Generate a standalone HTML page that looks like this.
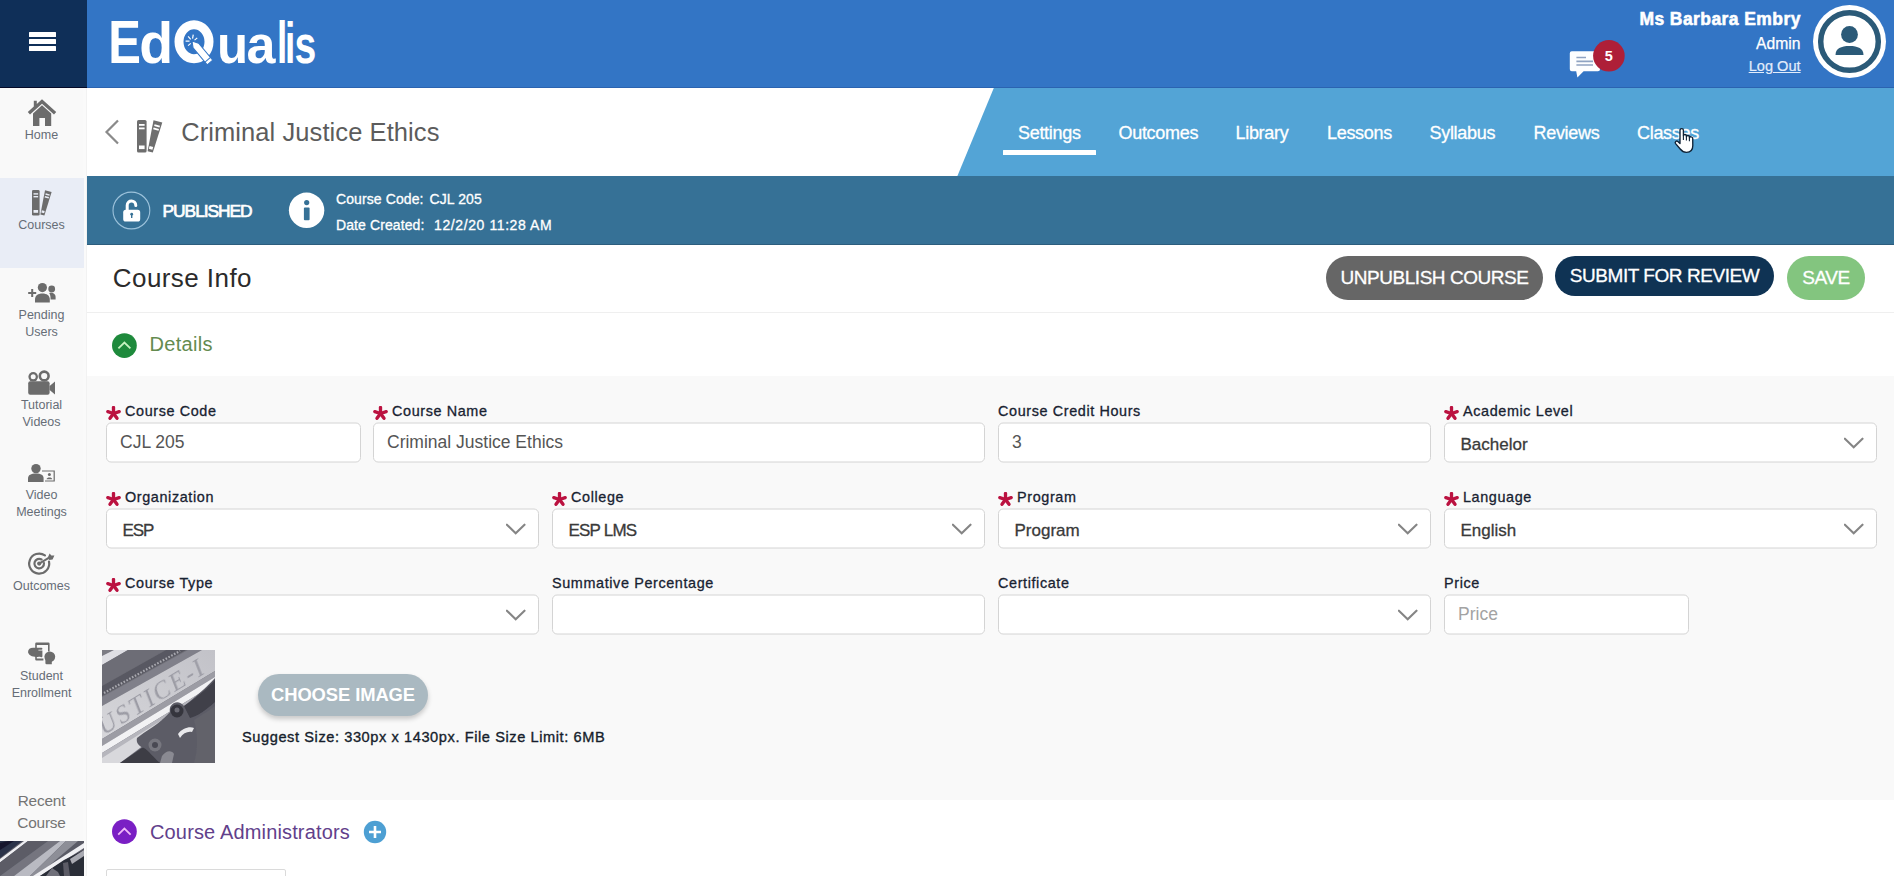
<!DOCTYPE html>
<html>
<head>
<meta charset="utf-8">
<title>EdQualis - Course Settings</title>
<style>
*{box-sizing:border-box;margin:0;padding:0}
html,body{width:1894px;height:876px;overflow:hidden;background:#fff}
body{font-family:"Liberation Sans",sans-serif;position:relative;color:#222}
.abs{position:absolute}
.t{position:absolute;white-space:nowrap;line-height:1}
/* header */
#hdr{left:0;top:0;width:1894px;height:88px;background:#3375c5;border-bottom:1px solid #2b63b0}
#ham{left:0;top:0;width:87px;height:88px;background:#0f2f58;border-bottom:1px solid #040a28}
#ham i{position:absolute;left:28.8px;width:27.4px;height:5px;background:#fff;border-radius:0.5px}
#side{left:0;top:88px;width:87px;height:788px;background:#f9f9f9;border-right:1px solid #f2f2f2;box-shadow:inset -3px 0 0 #fafafa}
#sideact{left:0;top:178px;width:84px;height:90px;background:#e9edf6}
.sl{transform:translateY(0.8px);position:absolute;left:0;width:83px;text-align:center;font-size:12.5px;line-height:17px;color:#666d77}
.si{position:absolute;fill:#6b6b6b}
/* title bar */
#tbar{left:87px;top:88px;width:1807px;height:88px;background:#fff}
#tabs{left:957px;top:88px;width:937px;height:88px;background:#53a4d6;clip-path:polygon(36.8px 0,100% 0,100% 100%,0.4px 100%)}
.tab{position:absolute;top:123.5px;font-size:18px;color:#fff;white-space:nowrap;line-height:1;letter-spacing:-0.3px;-webkit-text-stroke:0.3px #fff}
#sbar{left:87px;top:176px;width:1807px;height:69px;background:#367196;border-bottom:1px solid #2c5d7d}
/* content */
#info{left:87px;top:245px;width:1807px;height:69px;background:#fff;border-bottom:2px solid #efefef}
#det{left:87px;top:313px;width:1807px;height:63px;background:#fff}
#form{left:87px;top:376px;width:1807px;height:424px;background:#f9f9f9}
#adm{left:87px;top:800px;width:1807px;height:76px;background:#fff}
.sb{font-size:14px;color:#fff;letter-spacing:0.1px;-webkit-text-stroke:0.3px #fff}
.btn{-webkit-text-stroke:0.3px #fff;position:absolute;border-radius:22px;color:#fff;font-size:19px;text-align:center;white-space:nowrap}
.lbl{position:absolute;font-size:14.4px;color:#182231;white-space:nowrap;line-height:1;letter-spacing:0.62px;transform:translateY(-1px);-webkit-text-stroke:0.3px #182231}
.star{position:absolute;width:15px;height:15px}
.inp{transform:translateY(0.5px);position:absolute;height:39.6px;background:#fff;border:1px solid #d4d4d4;border-radius:5px;font-size:17.5px;color:#555;line-height:37px;padding-left:13px;white-space:nowrap}
.sel{font-size:17px;color:#3a3a3a;padding-left:15.5px;line-height:42.8px;-webkit-text-stroke:0.3px #3a3a3a}
.chev{position:absolute;right:12px;top:11.2px;width:20px;height:16px}
</style>
</head>
<body>
<!-- HEADER -->
<div id="hdr" class="abs"></div>
<div id="ham" class="abs"><i style="top:31.8px"></i><i style="top:39px"></i><i style="top:46.2px"></i></div>

<!-- logo -->
<svg class="abs" id="logo" style="left:100px;top:10px" width="230" height="70" viewBox="100 10 230 70">
 <g fill="#fff" font-family="Liberation Sans" font-weight="bold" font-size="56">
  <text x="0" y="0" transform="translate(108.3,62.6) scale(0.875,1.08)">E</text>
  <text x="0" y="0" transform="translate(139.3,62.6) scale(0.99,1.03)">d</text>
  <text x="0" y="0" transform="translate(217,62.6) scale(0.91,0.97)">u</text>
  <text x="0" y="0" transform="translate(246.6,62.6) scale(0.93,0.97)">a</text>
  <text x="0" y="0" transform="translate(277,62.6) scale(0.66,1.05)">l</text>
  <text x="0" y="0" transform="translate(285,62.6) scale(0.66,1.03)">i</text>
  <text x="0" y="0" transform="translate(294.5,62.6) scale(0.70,0.97)">s</text>
 </g>
 <ellipse cx="194" cy="41.8" rx="15" ry="17" fill="none" stroke="#fff" stroke-width="9"/>
 <g transform="translate(192,41) rotate(-40)">
  <path d="M-3.6 6 L0 0 L3.6 6 L3.6 28 L-3.6 28 Z" fill="#fff" stroke="#3375c5" stroke-width="1"/>
  <path d="M-3.6 24.5 H3.6" stroke="#3375c5" stroke-width="1"/>
  <path d="M0 -2 V-6 M-2 -1.5 L-5 -4 M2 -1.5 L5 -4 M-2.5 1 H-6 M2.5 1 H6" stroke="#fff" stroke-width="1.2"/>
 </g>
</svg>
<!-- user -->
<div class="t" style="right:93.2px;top:11px;font-size:17.5px;font-weight:bold;color:#fff;letter-spacing:0.42px;-webkit-text-stroke:0.55px #fff">Ms Barbara Embry</div>
<div class="t" style="right:93.6px;top:36.2px;font-size:15.7px;color:#fff;-webkit-text-stroke:0.25px #fff">Admin</div>
<div class="t" style="right:93.4px;top:58.5px;font-size:14.6px;color:#e3edfb;text-decoration:underline;-webkit-text-stroke:0.2px #e3edfb">Log Out</div>
<svg class="abs" style="left:1812px;top:4px" width="76" height="76" viewBox="0 0 76 76">
 <circle cx="37.5" cy="37.5" r="36.5" fill="#fff"/>
 <circle cx="37.5" cy="37.5" r="28.8" fill="#fff" stroke="#2b5a78" stroke-width="5.5"/>
 <circle cx="37.5" cy="30.5" r="8.4" fill="#2b5a78"/>
 <path d="M23.5 51 C23.5 44.5 29 42 37.5 42 C46 42 51.5 44.5 51.5 51 Z" fill="#2b5a78"/>
</svg>
<!-- chat -->
<svg class="abs" style="left:1566px;top:38px" width="62" height="44" viewBox="1566 38 62 44">
 <path d="M1571.8 51.3 H1598 Q1600 51.3 1600 53.3 V69.2 Q1600 71.2 1598 71.2 H1583.6 L1577.4 77.6 L1576.2 71.2 H1571.8 Q1569.8 71.2 1569.8 69.2 V53.3 Q1569.8 51.3 1571.8 51.3 Z" fill="#fdfeff"/>
 <path d="M1576.4 57.5 H1586 M1576.4 61.3 H1593 M1576.4 65 H1593" stroke="#8fa3c2" stroke-width="1.7"/>
 <circle cx="1608.9" cy="55.8" r="15.8" fill="#ae1f38"/>
 <text x="1608.9" y="61" text-anchor="middle" font-family="Liberation Sans" font-weight="bold" font-size="14.5" fill="#fff">5</text>
</svg>

<!-- SIDEBAR -->
<div id="side" class="abs"></div>
<div id="sideact" class="abs"></div>

<svg class="abs" style="left:0;top:88px" width="87" height="600" viewBox="0 88 87 600">
 <!-- home -->
 <g fill="#6c6c6c">
  <path d="M42 99.3 L56.2 112 L54 114.6 L42 103.7 L30 114.6 L27.8 112 L33.8 106.6 V100.8 H36.8 V103.9 Z"/>
  <path d="M42 105.2 L51.2 113.6 V126 H45 V118 H39.4 V126 H33 V113.6 Z"/>
 </g>
 <!-- courses -->
 <g fill="#6c6c6c">
  <rect x="32" y="190" width="7.6" height="25.5" rx="1.3"/>
  <path d="M45 190.2 L51.6 192 L44.4 215.6 L40.4 214.6 Z"/>
 </g>
 <g fill="#e9edf6">
  <rect x="33.5" y="193.2" width="4.6" height="1.4"/><rect x="33.5" y="196" width="4.6" height="1.4"/><rect x="33.5" y="210" width="4.6" height="2.8"/>
  <path d="M45.8 193.3 L49.8 194.4 L49.4 195.8 L45.4 194.7 Z"/><path d="M45 196 L49 197.1 L48.6 198.5 L44.6 197.4 Z"/><path d="M41.9 210.3 L44.7 211.1 L44.1 213.3 L41.3 212.5 Z"/>
 </g>
 <!-- pending users -->
 <g fill="#6c6c6c">
  <path d="M31.2 289 H33.2 V292 H36.2 V294 H33.2 V297 H31.2 V294 H28.2 V292 H31.2 Z"/>
  <circle cx="42.4" cy="287.6" r="4.6"/>
  <path d="M35 302.6 V299.4 C35 295.4 38 293.4 42.4 293.4 C46.8 293.4 49.8 295.4 49.8 299.4 V302.6 Z"/>
  <circle cx="51.7" cy="289" r="3.4"/>
  <path d="M49.2 293 C53.4 292.2 55.6 294.4 55.6 296.8 V299.6 H50.6 C50.6 296.8 50.4 294.8 49.2 293 Z"/>
 </g>
 <!-- tutorial videos -->
 <g fill="#6c6c6c">
  <circle cx="33.2" cy="376.8" r="4.8"/><circle cx="44.2" cy="376" r="5.7"/>
  <rect x="28.2" y="381.2" width="21.4" height="13.6" rx="2"/>
  <path d="M49.6 386 L55 381.6 V394.4 L49.6 390 Z"/>
 </g>
 <circle cx="33.2" cy="376.8" r="2.5" fill="#f9f9f9"/><circle cx="44.2" cy="376" r="3.1" fill="#f9f9f9"/>
 <!-- video meetings -->
 <g fill="#6c6c6c">
  <circle cx="36" cy="468.6" r="4.7"/>
  <path d="M28 482 V478.6 C28 475 31 473.6 36 473.6 C41 473.6 43.6 475 43.6 478.6 V482 Z"/>
  <path d="M42 470.4 H54.8 V481.6 H45 V480.4 H53.6 V471.6 H42 Z"/>
  <circle cx="49.4" cy="474.6" r="1.5"/><path d="M46.6 479.2 C46.6 477 52.2 477 52.2 479.2 Z"/>
 </g>
 <!-- outcomes -->
 <g fill="none" stroke="#6c6c6c" stroke-width="2.2" stroke-linecap="round">
  <path d="M44.94 555.41 A10 10 0 1 0 48.98 561.52"/>
  <path d="M41.6 559.44 A4.8 4.8 0 1 0 43.98 563.18"/>
 </g>
 <circle cx="39.2" cy="563.6" r="2.1" fill="#6c6c6c"/>
 <path d="M39.2 563.6 L50 557.2" stroke="#6c6c6c" stroke-width="2"/>
 <path d="M47.6 558 L49.6 553.4 L51.4 555.4 L54.4 555.4 L52.6 559.4 L49.4 560 Z" fill="#6c6c6c"/>
 <!-- student enrollment -->
 <g fill="#6c6c6c">
  <path d="M36.4 642.6 H48.4 Q49.6 642.6 49.6 643.8 V651.4 H48 V645 H36.8 V658.6 H43.4 V660.5 H36.4 Q35.2 660.5 35.2 659.3 V643.8 Q35.2 642.6 36.4 642.6 Z"/>
  <path d="M28 652.2 C28 649.2 30.2 647.8 33 647.8 H41.4 C42.8 647.8 42.8 649.8 41.4 649.8 H38.4 V650.6 H42.4 V656.2 C42.4 657.2 41 657.4 40 656.8 C38 657 29.4 657.6 28 652.2 Z"/>
  <circle cx="49.8" cy="656.8" r="5.4"/>
  <path d="M45.4 658 H51.8 V664.2 H46.6 Q45.4 664.2 45.4 663 Z"/>
 </g>
</svg>
<div class="sl" style="top:125.5px">Home</div>
<div class="sl" style="top:215.5px">Courses</div>
<div class="sl" style="top:306px">Pending<br>Users</div>
<div class="sl" style="top:396px">Tutorial<br>Videos</div>
<div class="sl" style="top:486px">Video<br>Meetings</div>
<div class="sl" style="top:576.5px">Outcomes</div>
<div class="sl" style="top:666.5px">Student<br>Enrollment</div>
<div class="sl" style="top:789.3px;font-size:15.4px;line-height:21.8px;letter-spacing:-0.2px;color:#747474">Recent<br>Course</div>
<div id="thumb" class="abs" style="left:0;top:841px;width:84px;height:35px;background:#3a3d4c;overflow:hidden"><svg width="84" height="35" viewBox="0 841 84 35" style="display:block">
 <defs><filter id="bl2"><feGaussianBlur stdDeviation="0.6"/></filter></defs>
 <rect x="0" y="841" width="84" height="35" fill="#5a5b66"/>
 <g filter="url(#bl2)">
  <polygon points="0,841 22,841 0,858" fill="#2a3048"/>
  <polygon points="0,843 8,841 14,841 0,850" fill="#14182e"/>
  <polygon points="0,859 24,841 28,841 0,862.5" fill="#eeeef2"/>
  <polygon points="0,862.5 28,841 48,841 0,876" fill="#5b5c66"/>
  <polygon points="0,876 48,841 60,841 14,876" fill="#74757f"/>
  <polygon points="14,876 60,841 66,841 30,876" fill="#b9bac2"/>
  <polygon points="30,876 66,841 78,841 37,876" fill="#8d8e97"/>
  <polygon points="33,876 84,843 84,848 40,876" fill="#f0f0f3"/>
  <polygon points="40,876 64,860 84,850 84,876" fill="#2c2d38"/>
  <polygon points="70,859 84,850 84,856 72,864" fill="#a9aab2"/>
  <polygon points="46,876 52,868 58,872 60,876" fill="#6f707a"/>
  <polygon points="63,863 68,862 70,876 64,876" fill="#5b5c66"/>
 </g>
</svg></div>

<!-- TITLE BAR -->
<div id="tbar" class="abs"></div>
<div id="tabs" class="abs"></div>
<div id="sbar" class="abs"></div>

<!-- back chevron, books, title -->
<svg class="abs" style="left:100px;top:115px" width="70" height="42" viewBox="100 115 70 42">
 <path d="M118 120.5 L106.5 132 L118 143.5" fill="none" stroke="#8a8a8a" stroke-width="2.2"/>
 <g fill="#6e6e6e">
  <rect x="137" y="120" width="9.6" height="32.5" rx="1.6"/>
  <path d="M153.5 120.3 L162.3 122.6 L152.8 152.5 L147.6 151.2 Z"/>
 </g>
 <g fill="#fff">
  <rect x="139" y="124" width="5.6" height="1.8"/><rect x="139" y="127.5" width="5.6" height="1.8"/>
  <rect x="139" y="145.5" width="5.6" height="3.6"/>
  <path d="M154.6 124.3 L160 125.8 L159.5 127.5 L154.1 126 Z"/><path d="M153.6 127.6 L159 129.1 L158.5 130.8 L153.1 129.3 Z"/>
  <path d="M149.6 146 L153.2 147 L152.4 149.8 L148.8 148.8 Z"/>
 </g>
</svg>
<div class="t" style="left:181.2px;top:120px;font-size:25.5px;color:#5c5c5c;letter-spacing:0.08px">Criminal Justice Ethics</div>
<div class="tab" style="left:1018px">Settings</div>
<div class="abs" style="left:1003px;top:150.4px;width:93px;height:5px;background:#fff;border-radius:0.5px"></div>
<div class="tab" style="left:1118.5px">Outcomes</div>
<div class="tab" style="left:1235.5px">Library</div>
<div class="tab" style="left:1327px">Lessons</div>
<div class="tab" style="left:1429.5px">Syllabus</div>
<div class="tab" style="left:1533.5px">Reviews</div>
<div class="tab" style="left:1637px">Classes</div>
<!-- cursor -->
<svg class="abs" style="left:1670px;top:124px" width="28" height="32" viewBox="1670 124 28 32">
 <path d="M1680 141.6 L1680 130.3 C1680 128.1 1683.4 128.1 1683.4 130.3 L1683.4 135.7 C1683.6 134.1 1686.3 134.1 1686.4 135.9 L1686.4 136.7 C1686.6 135.1 1689.3 135.1 1689.4 136.9 L1689.4 137.7 C1689.7 136.3 1692.6 136.5 1692.7 138.3 L1692.8 145.5 C1692.8 149.6 1690.5 152.3 1686.5 152.3 C1683 152.3 1681.8 151.2 1680.2 149 L1675.6 143.6 C1674.4 142 1676.4 140.2 1677.9 141.5 L1680 143.6 Z" fill="#fff" stroke="#0f2236" stroke-width="1.35" stroke-linejoin="round"/>
 <path d="M1683.4 135.7 V140 M1686.4 136.7 V140.6 M1689.4 137.7 V141.2" stroke="#0f2236" stroke-width="1.1" fill="none"/>
</svg>

<!-- status bar -->
<svg class="abs" style="left:108px;top:186px" width="230" height="50" viewBox="108 186 230 50">
 <circle cx="131.4" cy="210.5" r="18.4" fill="none" stroke="#9cc2db" stroke-width="1.1"/>
 <path d="M127.2 210 V205.2 C127.2 199.6 135.8 199.6 135.8 205.4" fill="none" stroke="#fff" stroke-width="3" stroke-linecap="round"/>
 <rect x="123.2" y="209.8" width="17" height="11.7" rx="2.6" fill="#fff"/>
 <circle cx="131.7" cy="214.2" r="1.4" fill="#367196"/><rect x="131" y="214.2" width="1.4" height="3.8" fill="#367196"/>
 <circle cx="306.6" cy="210.3" r="17.7" fill="#fff"/>
 <circle cx="306.7" cy="202.6" r="2.6" fill="#367196"/>
 <rect x="303.9" y="207.6" width="5.7" height="12.6" rx="1" fill="#367196"/>
</svg>
<div class="t" style="left:162.6px;top:203.2px;font-size:17.4px;color:#fff;letter-spacing:-1.07px;-webkit-text-stroke:0.7px #fff">PUBLISHED</div>
<div class="t sb" style="left:336px;top:192.3px">Course Code:</div>
<div class="t sb" style="left:429.5px;top:192.3px">CJL 205</div>
<div class="t sb" style="left:336px;top:217.5px">Date Created:</div>
<div class="t sb" style="left:434px;top:217.5px;letter-spacing:0.6px">12/2/20 11:28 AM</div>

<!-- CONTENT -->
<div id="info" class="abs"></div>
<div id="det" class="abs"></div>
<div id="form" class="abs"></div>
<div id="adm" class="abs"></div>

<div class="t" style="left:112.8px;top:264.8px;font-size:26px;color:#2b2b2b;letter-spacing:0.43px">Course Info</div>
<div class="btn" style="left:1326px;top:256px;width:217px;height:44px;line-height:44px;background:#666;letter-spacing:-0.45px">UNPUBLISH COURSE</div>
<div class="btn" style="left:1555px;top:256px;width:219px;height:40px;line-height:39px;background:#0f3354;letter-spacing:-0.45px">SUBMIT FOR REVIEW</div>
<div class="btn" style="left:1787px;top:256px;width:78px;height:44px;line-height:44px;background:#83c57f;letter-spacing:-0.45px">SAVE</div>
<svg class="abs" style="left:111px;top:332px" width="27" height="27" viewBox="0 0 27 27"><circle cx="13.4" cy="13.6" r="12.4" fill="#1e8a3c"/><path d="M7.4 16.4 L13.4 10.6 L19.4 16.4" fill="none" stroke="#c6f3c0" stroke-width="1.8"/></svg>
<div class="t" style="left:149.6px;top:334.3px;font-size:20px;color:#648b4f;letter-spacing:0.3px">Details</div>
<svg class="star" style="left:105.8px;top:405.5px" viewBox="-6.5 -6.5 13 13"><g stroke="#bb1240" stroke-width="2.9" stroke-linecap="round"><path d="M0 0 V-5.2"/><path d="M0 0 L4.95 -1.6"/><path d="M0 0 L3.05 4.2"/><path d="M0 0 L-3.05 4.2"/><path d="M0 0 L-4.95 -1.6"/></g></svg><div class="lbl" style="left:125px;top:405px">Course Code</div>
<div class="inp" style="left:106px;top:422px;width:255px">CJL 205</div>
<svg class="star" style="left:372.8px;top:405.5px" viewBox="-6.5 -6.5 13 13"><g stroke="#bb1240" stroke-width="2.9" stroke-linecap="round"><path d="M0 0 V-5.2"/><path d="M0 0 L4.95 -1.6"/><path d="M0 0 L3.05 4.2"/><path d="M0 0 L-3.05 4.2"/><path d="M0 0 L-4.95 -1.6"/></g></svg><div class="lbl" style="left:392px;top:405px">Course Name</div>
<div class="inp" style="left:373px;top:422px;width:612px">Criminal Justice Ethics</div>
<div class="lbl" style="left:998px;top:405px">Course Credit Hours</div>
<div class="inp" style="left:998px;top:422px;width:433px">3</div>
<svg class="star" style="left:1443.8px;top:405.5px" viewBox="-6.5 -6.5 13 13"><g stroke="#bb1240" stroke-width="2.9" stroke-linecap="round"><path d="M0 0 V-5.2"/><path d="M0 0 L4.95 -1.6"/><path d="M0 0 L3.05 4.2"/><path d="M0 0 L-3.05 4.2"/><path d="M0 0 L-4.95 -1.6"/></g></svg><div class="lbl" style="left:1463px;top:405px">Academic Level</div>
<div class="inp sel" style="left:1444px;top:422px;width:433px">Bachelor<svg class="chev" viewBox="0 0 20 16"><path d="M0.9 4.2 L9.7 12.7 L18.5 4.2" fill="none" stroke="#858585" stroke-width="2.1" stroke-linecap="round"/></svg></div>
<svg class="star" style="left:105.8px;top:491.5px" viewBox="-6.5 -6.5 13 13"><g stroke="#bb1240" stroke-width="2.9" stroke-linecap="round"><path d="M0 0 V-5.2"/><path d="M0 0 L4.95 -1.6"/><path d="M0 0 L3.05 4.2"/><path d="M0 0 L-3.05 4.2"/><path d="M0 0 L-4.95 -1.6"/></g></svg><div class="lbl" style="left:125px;top:491px">Organization</div>
<div class="inp sel" style="left:106px;top:508px;width:433px"><span style="letter-spacing:-1.1px">ESP</span><svg class="chev" viewBox="0 0 20 16"><path d="M0.9 4.2 L9.7 12.7 L18.5 4.2" fill="none" stroke="#858585" stroke-width="2.1" stroke-linecap="round"/></svg></div>
<svg class="star" style="left:551.8px;top:491.5px" viewBox="-6.5 -6.5 13 13"><g stroke="#bb1240" stroke-width="2.9" stroke-linecap="round"><path d="M0 0 V-5.2"/><path d="M0 0 L4.95 -1.6"/><path d="M0 0 L3.05 4.2"/><path d="M0 0 L-3.05 4.2"/><path d="M0 0 L-4.95 -1.6"/></g></svg><div class="lbl" style="left:571px;top:491px">College</div>
<div class="inp sel" style="left:552px;top:508px;width:433px"><span style="letter-spacing:-0.8px">ESP LMS</span><svg class="chev" viewBox="0 0 20 16"><path d="M0.9 4.2 L9.7 12.7 L18.5 4.2" fill="none" stroke="#858585" stroke-width="2.1" stroke-linecap="round"/></svg></div>
<svg class="star" style="left:997.8px;top:491.5px" viewBox="-6.5 -6.5 13 13"><g stroke="#bb1240" stroke-width="2.9" stroke-linecap="round"><path d="M0 0 V-5.2"/><path d="M0 0 L4.95 -1.6"/><path d="M0 0 L3.05 4.2"/><path d="M0 0 L-3.05 4.2"/><path d="M0 0 L-4.95 -1.6"/></g></svg><div class="lbl" style="left:1017px;top:491px">Program</div>
<div class="inp sel" style="left:998px;top:508px;width:433px">Program<svg class="chev" viewBox="0 0 20 16"><path d="M0.9 4.2 L9.7 12.7 L18.5 4.2" fill="none" stroke="#858585" stroke-width="2.1" stroke-linecap="round"/></svg></div>
<svg class="star" style="left:1443.8px;top:491.5px" viewBox="-6.5 -6.5 13 13"><g stroke="#bb1240" stroke-width="2.9" stroke-linecap="round"><path d="M0 0 V-5.2"/><path d="M0 0 L4.95 -1.6"/><path d="M0 0 L3.05 4.2"/><path d="M0 0 L-3.05 4.2"/><path d="M0 0 L-4.95 -1.6"/></g></svg><div class="lbl" style="left:1463px;top:491px">Language</div>
<div class="inp sel" style="left:1444px;top:508px;width:433px">English<svg class="chev" viewBox="0 0 20 16"><path d="M0.9 4.2 L9.7 12.7 L18.5 4.2" fill="none" stroke="#858585" stroke-width="2.1" stroke-linecap="round"/></svg></div>
<svg class="star" style="left:105.8px;top:577.5px" viewBox="-6.5 -6.5 13 13"><g stroke="#bb1240" stroke-width="2.9" stroke-linecap="round"><path d="M0 0 V-5.2"/><path d="M0 0 L4.95 -1.6"/><path d="M0 0 L3.05 4.2"/><path d="M0 0 L-3.05 4.2"/><path d="M0 0 L-4.95 -1.6"/></g></svg><div class="lbl" style="left:125px;top:577px">Course Type</div>
<div class="inp sel" style="left:106px;top:594px;width:433px"><svg class="chev" viewBox="0 0 20 16"><path d="M0.9 4.2 L9.7 12.7 L18.5 4.2" fill="none" stroke="#858585" stroke-width="2.1" stroke-linecap="round"/></svg></div>
<div class="lbl" style="left:552px;top:577px">Summative Percentage</div>
<div class="inp" style="left:552px;top:594px;width:433px"></div>
<div class="lbl" style="left:998px;top:577px">Certificate</div>
<div class="inp sel" style="left:998px;top:594px;width:433px"><svg class="chev" viewBox="0 0 20 16"><path d="M0.9 4.2 L9.7 12.7 L18.5 4.2" fill="none" stroke="#858585" stroke-width="2.1" stroke-linecap="round"/></svg></div>
<div class="lbl" style="left:1444px;top:577px">Price</div>
<div class="inp" style="left:1444px;top:594px;width:245px;color:#a3a3a3">Price</div>

<!-- course image placeholder -->
<div id="cimg" class="abs" style="left:102px;top:650px;width:113px;height:113px;background:#8b8d94;overflow:hidden"><svg width="113" height="113" viewBox="0 0 113 113" style="display:block">
 <defs>
  <linearGradient id="gA" x1="0" y1="0" x2="1" y2="1"><stop offset="0" stop-color="#7c7c85"/><stop offset="1" stop-color="#5a5a63"/></linearGradient>
  <linearGradient id="gB" x1="0" y1="1" x2="1" y2="0"><stop offset="0" stop-color="#d6d6da"/><stop offset="1" stop-color="#c2c2c8"/></linearGradient>
  <filter id="bl"><feGaussianBlur stdDeviation="0.7"/></filter>
 </defs>
 <rect width="113" height="113" fill="#70707a"/>
 <g filter="url(#bl)">
  <!-- top-left dark mouldings -->
  <polygon points="0,0 113,0 113,2 0,56" fill="url(#gA)"/>
  <polygon points="0,6 12,0 26,0 0,15" fill="#dedee3"/>
  <polygon points="0,15 26,0 64,0 0,36" fill="#6d6d76"/>
  <polygon points="0,36 64,0 84,0 0,46" fill="#595962"/>
  <path d="M2 43 L78 1" stroke="#a9a9b0" stroke-width="2.2" stroke-dasharray="1.6 1.6" fill="none"/>
  <polygon points="0,47 86,0 100,0 0,56" fill="#80808a"/>
  <!-- JUSTICE frieze -->
  <polygon points="0,56 100,0 113,0 113,21 0,89" fill="url(#gB)"/>
  <polygon points="0,89 113,21 113,27 0,96" fill="#9c9ca4"/>
  <polygon points="0,96 113,27 113,34 0,103" fill="#f2f2f4"/>
  <polygon points="0,103 113,34 113,42 0,113" fill="#b6b6bd"/>
  <polygon points="0,108 60,70 70,74 18,113 0,113" fill="#d8d8dc"/>
  <polygon points="18,113 60,84 80,113" fill="#3c3c45"/>
  <!-- capital -->
  <path d="M35 88 C42 82 58 74 68 62 C66 54 76 48 82 56 C92 48 104 38 113 28 V113 H58 C52 108 46 100 42 98 C36 96 34 92 35 88 Z" fill="#5c5c66"/>
  <path d="M82 56 C94 48 106 38 113 30 V52 C104 60 96 66 88 68 Z" fill="#3f3f49"/>
  <circle cx="75" cy="61" r="6.5" fill="#35353e"/><circle cx="75" cy="60" r="2.5" fill="#6c6c75"/>
  <circle cx="53" cy="95" r="6.5" fill="#77777f"/><circle cx="53" cy="95" r="3" fill="#4a4a53"/>
  <path d="M76 84 C80 78 88 76 92 78 L90 82 C86 81 81 83 78 88 Z" fill="#e9e9ec"/>
  <path d="M60 106 C64 100 70 100 72 104 L70 113 H58 Z" fill="#8a8a92"/>
  <path d="M92 70 C98 66 108 60 113 56 V113 H92 C96 100 96 84 92 70 Z" fill="#62626b"/>
 </g>
 <text transform="translate(1,86) rotate(-31.5) skewX(-10)" font-family="Liberation Serif" font-size="25" fill="#9c9ca5" letter-spacing="2.2" filter="url(#bl)">USTICE-I</text>
</svg></div>
<div class="abs" style="left:258px;top:674px;width:170px;height:42px;border-radius:21px;background:#aab9c1;box-shadow:0 3px 5px rgba(0,0,0,0.2);color:#fff;font-weight:bold;font-size:18.4px;line-height:41px;text-align:center;letter-spacing:-0.1px">CHOOSE IMAGE</div>
<div class="t" style="left:242px;top:729.5px;font-size:14.6px;color:#161e2c;letter-spacing:0.58px;-webkit-text-stroke:0.35px #161e2c">Suggest Size: 330px x 1430px. File Size Limit: 6MB</div>
<!-- administrators -->
<svg class="abs" style="left:111px;top:818px" width="27" height="27" viewBox="0 0 27 27"><circle cx="13.4" cy="13.6" r="12.4" fill="#7a1fc4"/><path d="M7.2 16.6 L13.4 10.6 L19.6 16.6" fill="none" stroke="#f0b9f8" stroke-width="1.8"/></svg>
<div class="t" style="left:150px;top:821.8px;font-size:20px;color:#62408b;letter-spacing:0.15px">Course Administrators</div>
<svg class="abs" style="left:363px;top:820px" width="24" height="24" viewBox="0 0 24 24"><circle cx="12" cy="12" r="11.2" fill="#4d9fd3"/><path d="M12 6 V18 M6 12 H18" stroke="#fff" stroke-width="2.6"/></svg>
<div class="abs" style="left:106px;top:869px;width:180px;height:20px;background:#fff;border:1px solid #dadada;border-radius:2px"></div>
</body>
</html>
